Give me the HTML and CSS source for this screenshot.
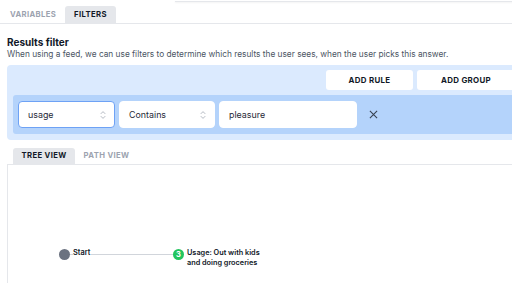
FILE: index.html
```html
<!DOCTYPE html>
<html lang="en">
<head>
  <meta charset="UTF-8">
  <title>Results filter</title>
  <link rel="stylesheet" href="styles.css">
</head>
<body>
  <div class="page">
    <div class="topbar"></div>

    <nav class="tabs">
      <span class="tab">Variables</span>
      <span class="tab active">Filters</span>
    </nav>

    <section class="content">
      <h2>Results filter</h2>
      <p class="hint">When using a feed, we can use filters to determine which results the user sees, when the user picks this answer.</p>

      <div class="filter-panel">
        <div class="actions">
          <button class="btn">ADD RULE</button>
          <button class="btn wide">ADD GROUP</button>
        </div>
        <div class="rule">
          <div class="select focus">
            <span>usage</span>
            <svg class="chev" viewBox="0 0 8 12" width="6" height="10"><path d="M1 4.5 L4 1.5 L7 4.5 M1 7.5 L4 10.5 L7 7.5" fill="none" stroke="#9ca3af" stroke-width="1"/></svg>
          </div>
          <div class="select">
            <span>Contains</span>
            <svg class="chev" viewBox="0 0 8 12" width="6" height="10"><path d="M1 4.5 L4 1.5 L7 4.5 M1 7.5 L4 10.5 L7 7.5" fill="none" stroke="#9ca3af" stroke-width="1"/></svg>
          </div>
          <div class="input">pleasure</div>
          <svg class="remove" viewBox="0 0 10 10" width="9" height="9"><path d="M1 1 L9 9 M9 1 L1 9" stroke="#374151" stroke-width="1.2"/></svg>
        </div>
      </div>

      <nav class="tabs small">
        <span class="tab active">Tree view</span>
        <span class="tab">Path view</span>
      </nav>

      <div class="tree">
        <div class="edge"></div>
        <div class="node start">
          <span class="dot"></span>
          <span class="label">Start</span>
        </div>
        <div class="node step">
          <span class="dot green">3</span>
          <span class="label">Usage: Out with kids<br>and doing groceries</span>
        </div>
      </div>
    </section>
  </div>
</body>
</html>
```

FILE: styles.css
```css
* { margin: 0; padding: 0; box-sizing: border-box; }
html, body { overflow: hidden; }
body {
  font-family: 'Inter', 'Liberation Sans', sans-serif;
  background: #fff;
  color: #111827;
  width: 512px;
  height: 283px;
}
.page {
  width: 560px;
}
.topbar {
  height: 2px;
  margin-left: 175px;
  border-bottom: 1px solid #e5e7eb;
  box-shadow: 0 1px 2px rgba(0, 0, 0, 0.05);
}
.tabs {
  display: flex;
  margin-top: 4px;
  padding-left: 1px;
  border-bottom: 1px solid #e5e7eb;
}
.tab {
  height: 17px;
  line-height: 17px;
  padding: 0 9px;
  font-size: 7.7px;
  font-weight: 700;
  letter-spacing: 0.35px;
  text-transform: uppercase;
  color: #9ca3af;
  border-radius: 3px 3px 0 0;
}
.tab.active {
  background: #e5e7eb;
  color: #111827;
}
.content {
  padding: 0 7px;
}
h2 {
  margin-top: 12px;
  font-size: 10px;
  font-weight: 700;
  line-height: 13px;
}
.hint {
  font-size: 8.3px;
  line-height: 11px;
  color: #4b5563;
}
.filter-panel {
  margin-top: 5px;
  background: #dbeafe;
  border-radius: 4px;
  padding: 5px 0 6px 6px;
}
.actions {
  display: flex;
  gap: 4px;
  padding-left: 313px;
}
.btn {
  width: 87px;
  height: 20px;
  border: none;
  border-radius: 3px;
  background: #fff;
  font-family: inherit;
  font-size: 7.9px;
  font-weight: 700;
  letter-spacing: 0.3px;
  color: #111827;
}
.btn.wide { width: 98px; }
.rule {
  display: flex;
  align-items: center;
  gap: 4px;
  margin-top: 5px;
  padding: 6px 5px;
  background: #b4d3fb;
  border-radius: 3px 0 0 3px;
}
.select, .input {
  height: 27px;
  display: flex;
  align-items: center;
  justify-content: space-between;
  padding: 0 9px;
  background: #fff;
  border: 1px solid #fff;
  border-radius: 4px;
  font-size: 8.9px;
  color: #1f2937;
}
.select { width: 96px; padding-right: 8px; }
.select.focus { width: 97px; border-color: #6ea2f5; }
.input { width: 138px; }
.remove { margin-left: 8px; }
.tabs.small {
  margin-top: 8px;
  padding-left: 6px;
  border-bottom: none;
}
.tabs.small .tab {
  height: 16px;
  line-height: 16px;
  padding: 0 8px 0 8.5px;
}
.tabs.small .tab + .tab { padding-left: 9px; }
.tree {
  position: relative;
  height: 130px;
  border: 1px solid #e5e7eb;
}
.edge {
  position: absolute;
  left: 60px;
  top: 89px;
  width: 105px;
  height: 1px;
  background: #d1d5db;
}
.node {
  position: absolute;
  display: flex;
  align-items: flex-start;
  gap: 3px;
  font-size: 7.3px;
  font-weight: 600;
  line-height: 10px;
  color: #111827;
}
.node.start { left: 51px; top: 84px; }
.node.start .label { font-size: 7.4px; }
.node.step { left: 165px; top: 84px; }
.dot {
  width: 11px;
  height: 11px;
  border-radius: 50%;
  background: #6b7280;
  flex-shrink: 0;
}
.dot.green {
  background: #22c55e;
  color: #fff;
  font-size: 7.5px;
  font-weight: 700;
  line-height: 11px;
  text-align: center;
}
.node .label {
  background: #fff;
  padding-right: 1px;
  margin-top: -1px;
}
```
